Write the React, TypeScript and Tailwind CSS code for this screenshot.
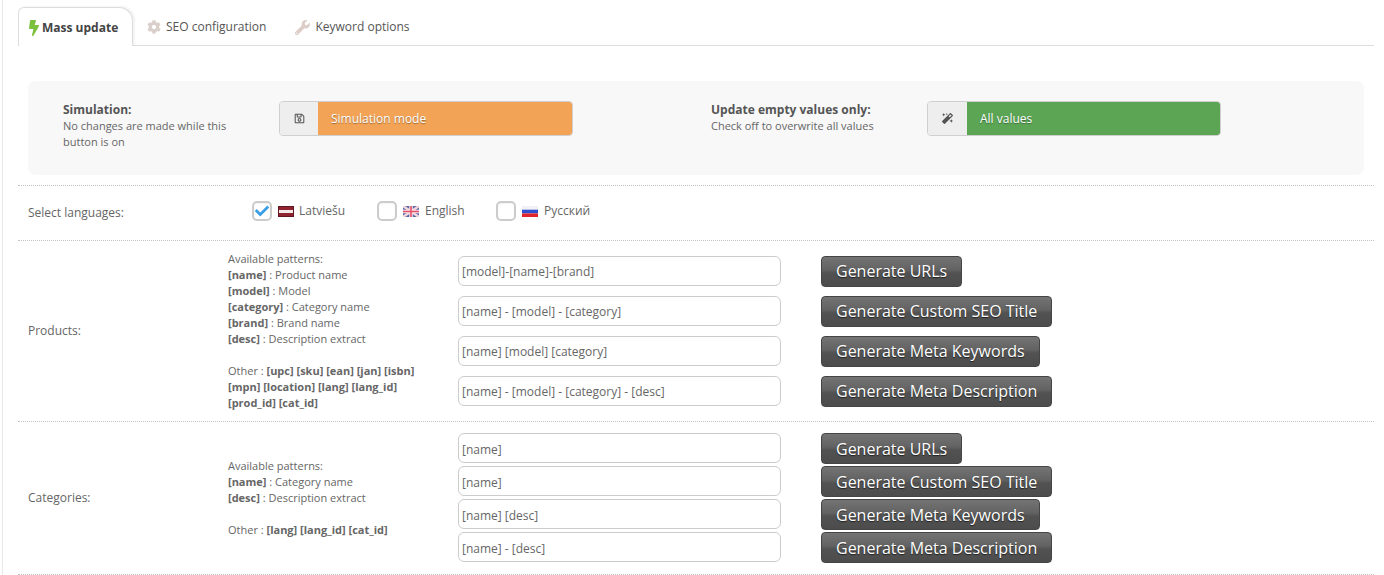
import React from "react";
import { FaBolt, FaCog, FaWrench, FaRegSave, FaMagic, FaCheck } from "react-icons/fa";

const B = ({ children }: { children: React.ReactNode }) => <b className="font-bold text-[#666]">{children}</b>;

function GenButton({ label }: { label: string }) {
  return (
    <button className="h-[31px] rounded-[4px] border border-[#454545] bg-[linear-gradient(#747474,#626262_45%,#525252_55%,#4c4c4c)] px-[14px] text-[16px] leading-[28px] text-white [text-shadow:0_1px_1px_rgba(0,0,0,0.6)]">
      {label}
    </button>
  );
}

function Field({ value, label }: { value: string; label: string }) {
  return (
    <div className="flex h-[31px] items-start">
      <input
        readOnly
        value={value}
        className="h-[30px] w-[323px] rounded-[6px] border border-[#cccccc] bg-white px-[3px] pt-[2px] text-[12px] text-[#666] outline-none"
      />
      <div className="ml-[40px]">
        <GenButton label={label} />
      </div>
    </div>
  );
}

const LV = () => (
  <svg width="16" height="11" viewBox="0 0 16 11" className="shrink-0">
    <rect width="16" height="11" fill="#8f2430" />
    <rect y="4" width="16" height="3" fill="#f3e9e9" />
    <rect x="0.5" y="0.5" width="15" height="10" fill="none" stroke="#5f1820" />
  </svg>
);
const GB = () => (
  <svg width="16" height="11" viewBox="0 0 16 11" className="shrink-0">
    <rect width="16" height="11" fill="#5a68a8" />
    <path d="M0 0L16 11M16 0L0 11" stroke="#f3d5dc" strokeWidth="2.4" />
    <path d="M8 0V11M0 5.5H16" stroke="#f6e6ea" strokeWidth="3.5" />
    <path d="M8 0V11M0 5.5H16" stroke="#e8506a" strokeWidth="1.6" />
  </svg>
);
const RU = () => (
  <svg width="16" height="11" viewBox="0 0 16 11" className="shrink-0">
    <rect width="16" height="4" fill="#f2f2f6" />
    <rect y="3.7" width="16" height="3.7" fill="#2f4fd0" />
    <rect y="7.4" width="16" height="3.6" fill="#e0242e" />
  </svg>
);

function Lang({ name, flag, checked, width, textGap }: { name: string; flag: React.ReactNode; checked?: boolean; width: string; textGap: string }) {
  return (
    <label className={`flex items-center ${width}`}>
      <span className="flex h-[20px] w-[20px] items-center justify-center rounded-[5px] border-2 border-[#cccccc] bg-white shadow-[inset_0_1px_2px_rgba(0,0,0,0.05)]">
        {checked && <FaCheck className="text-[14px] text-[#3a9fe4]" />}
      </span>
      <span className="ml-[6px]">{flag}</span>
      <span className={`text-[12px] text-[#666] ${textGap}`}>{name}</span>
    </label>
  );
}

function Toggle({ icon, text, color, iconWidth }: { icon: React.ReactNode; text: string; color: string; iconWidth: string }) {
  return (
    <div className="flex h-[35px] w-[294px] shrink-0 overflow-hidden rounded-[4px] border border-[#cfcfcf]">
      <div className={`flex shrink-0 items-center justify-center bg-[#eeeeee] text-[11px] text-[#555] ${iconWidth}`}>{icon}</div>
      <div className={`flex flex-1 items-center pl-[13px] text-[12px] text-white [text-shadow:0_1px_1px_rgba(0,0,0,0.35)] ${color}`}>{text}</div>
    </div>
  );
}

export default function App() {
  return (
    <div className="h-[575px] overflow-hidden bg-white font-['Open_Sans',sans-serif] text-[12px] leading-[16px] text-[#666]">
      <div className="ml-[2px] h-full w-[1372px] border-l border-[#e8e8e8] pl-[15px] pt-[7px]">
        {/* tabs */}
        <div className="flex h-[39px] w-[1356px] items-end border-b border-[#dddddd]">
          <div className="relative -mb-px flex h-[39px] w-[115px] items-center rounded-tl-[6px] rounded-tr-[14px] border border-b-0 border-[#dddddd] bg-white pl-[10px] pt-[1px] shadow-[2px_-1px_2px_rgba(0,0,0,0.05)]">
            <FaBolt className="h-[16px] w-[10px] text-[#7cc13d]" />
            <span className="ml-[3px] font-bold text-[#444]">Mass update</span>
          </div>
          <div className="flex h-[38px] items-center pl-[14px] pt-[2px]">
            <FaCog className="text-[14px] text-[#d9cfcb]" />
            <span className="ml-[5px] text-[#555]">SEO configuration</span>
          </div>
          <div className="flex h-[38px] items-center pl-[29px] pt-[2px]">
            <FaWrench className="text-[15px] text-[#dccdc8]" />
            <span className="ml-[5px] text-[#555]">Keyword options</span>
          </div>
        </div>

        {/* simulation panel */}
        <div className="h-[140px] w-[1356px] border-b border-dotted border-[#c4c4c4] pt-[35px]">
          <div className="ml-[10px] flex h-[94px] w-[1336px] items-start rounded-[8px] bg-[#f8f8f8] pl-[35px] pt-[20px]">
            <div className="w-[216px] shrink-0 pt-[1px]">
              <div className="font-bold text-[#555]">Simulation:</div>
              <div className="w-[170px] text-[11px]">No changes are made while this button is on</div>
            </div>
            <Toggle icon={<FaRegSave />} text="Simulation mode" color="bg-[#f2a355]" iconWidth="w-[38px]" />
            <div className="ml-[138px] w-[216px] shrink-0 pt-[1px]">
              <div className="font-bold text-[#555]">Update empty values only:</div>
              <div className="text-[11px]">Check off to overwrite all values</div>
            </div>
            <Toggle icon={<FaMagic />} text="All values" color="bg-[#5ba555]" iconWidth="w-[39px]" />
          </div>
        </div>

        {/* languages */}
        <div className="flex h-[55px] w-[1356px] items-center border-b border-dotted border-[#c4c4c4] pl-[10px]">
          <div className="w-[224px] shrink-0">Select languages:</div>
          <div className="-mt-[4px] flex items-center">
            <Lang name="Latviešu" flag={<LV />} checked width="w-[125px]" textGap="ml-[5px]" />
            <Lang name="English" flag={<GB />} width="w-[119px]" textGap="ml-[6px]" />
            <Lang name="Русский" flag={<RU />} width="w-[100px]" textGap="ml-[6px]" />
          </div>
        </div>

        {/* products */}
        <div className="flex h-[181px] w-[1356px] items-center border-b border-dotted border-[#c4c4c4] pl-[10px]">
          <div className="w-[200px] shrink-0">Products:</div>
          <div className="w-[230px] shrink-0 text-[11px]">
            <div>Available patterns:</div>
            <div><B>[name]</B> : Product name</div>
            <div><B>[model]</B> : Model</div>
            <div><B>[category]</B> : Category name</div>
            <div><B>[brand]</B> : Brand name</div>
            <div><B>[desc]</B> : Description extract</div>
            <div className="mt-[16px]">Other : <B>[upc] [sku] [ean] [jan] [isbn]</B></div>
            <div><B>[mpn] [location] [lang] [lang_id]</B></div>
            <div><B>[prod_id] [cat_id]</B></div>
          </div>
          <div className="flex flex-col gap-[9px]">
            <Field value="[model]-[name]-[brand]" label="Generate URLs" />
            <Field value="[name] - [model] - [category]" label="Generate Custom SEO Title" />
            <Field value="[name] [model] [category]" label="Generate Meta Keywords" />
            <Field value="[name] - [model] - [category] - [desc]" label="Generate Meta Description" />
          </div>
        </div>

        {/* categories */}
        <div className="flex h-[153px] w-[1356px] items-center border-b border-dotted border-[#c4c4c4] pl-[10px]">
          <div className="w-[200px] shrink-0">Categories:</div>
          <div className="w-[230px] shrink-0 text-[11px]">
            <div>Available patterns:</div>
            <div><B>[name]</B> : Category name</div>
            <div><B>[desc]</B> : Description extract</div>
            <div className="mt-[16px]">Other : <B>[lang] [lang_id] [cat_id]</B></div>
          </div>
          <div className="flex flex-col gap-[2px]">
            <Field value="[name]" label="Generate URLs" />
            <Field value="[name]" label="Generate Custom SEO Title" />
            <Field value="[name] [desc]" label="Generate Meta Keywords" />
            <Field value="[name] - [desc]" label="Generate Meta Description" />
          </div>
        </div>
      </div>
    </div>
  );
}
